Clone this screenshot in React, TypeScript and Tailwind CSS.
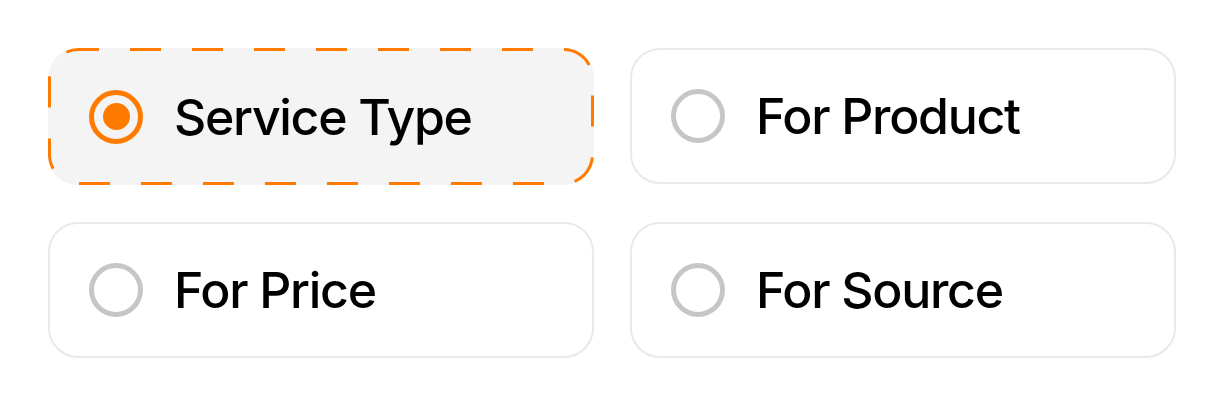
import { useState } from "react";

const options = ["Service Type", "For Product", "For Price", "For Source"];

function Radio({ checked }: { checked: boolean }) {
	if (checked) {
		return (
			<span className="flex h-[54px] w-[54px] shrink-0 items-center justify-center rounded-full border-[5px] border-[#ff7b00]">
				<span className="h-[27px] w-[27px] rounded-full bg-[#ff7b00]" />
			</span>
		);
	}
	return (
		<span className="h-[54px] w-[54px] shrink-0 rounded-full border-[5px] border-[#c6c6c6]" />
	);
}

export default function App() {
	const [selected, setSelected] = useState(0);

	return (
		<div
			className="grid w-[1224px] grid-cols-2 gap-x-9 gap-y-[37px] bg-white p-12"
			style={{ fontFamily: "Inter, 'Noto Sans', sans-serif" }}
		>
			{options.map((label, i) => {
				const active = i === selected;
				return (
					<button
						key={label}
						onClick={() => setSelected(i)}
						className={
							active
								? "relative flex h-[137px] items-center gap-[31px] rounded-[30px] bg-[#f4f4f4] pl-[41px] text-left"
								: "relative flex h-[136px] items-center gap-[31px] rounded-[30px] border-2 border-[#e8e9ec] bg-white pl-[39px] text-left"
						}
					>
						{active && (
							<svg className="pointer-events-none absolute inset-0 h-full w-full">
								<rect
									x="1.5"
									y="1.5"
									width="calc(100% - 3px)"
									height="calc(100% - 3px)"
									rx="29"
									fill="none"
									stroke="#ff7b00"
									strokeWidth="3"
									strokeDasharray="31 31"
									strokeDashoffset="10.5"
								/>
							</svg>
						)}
						<Radio checked={active} />
						<span className="text-[50px] leading-none font-medium tracking-[-1.3px] text-black">
							{label}
						</span>
					</button>
				);
			})}
		</div>
	);
}
